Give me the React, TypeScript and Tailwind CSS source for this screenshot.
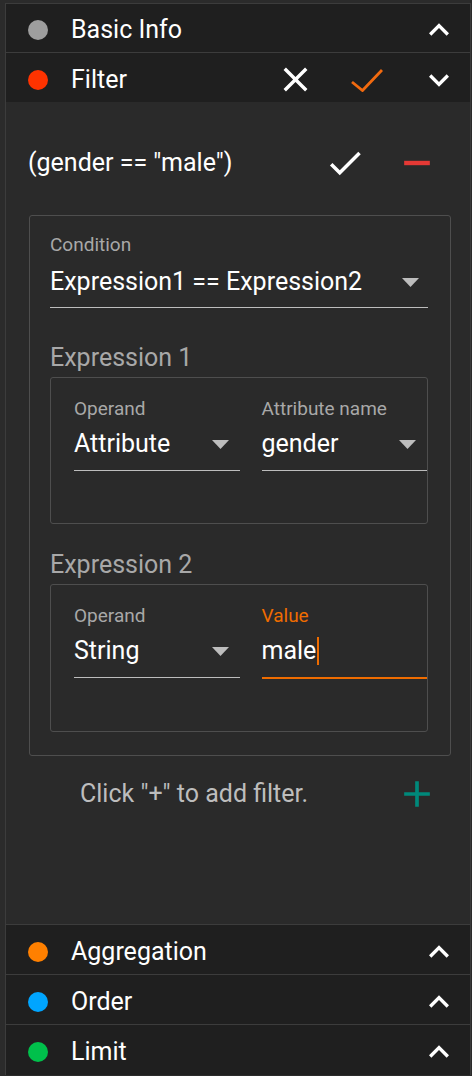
import React from "react";

type IconProps = { className?: string; size?: number };

const ChevronUp = ({ size = 40, className = "" }: IconProps) => (
  <svg width={size} height={size} viewBox="0 0 24 24" className={className} fill="currentColor">
    <path d="M12 8l-6 6 1.41 1.41L12 10.83l4.59 4.58L18 14z" />
  </svg>
);

const ChevronDown = ({ size = 40, className = "" }: IconProps) => (
  <svg width={size} height={size} viewBox="0 0 24 24" className={className} fill="currentColor">
    <path d="M16.59 8.59L12 13.17 7.41 8.59 6 10l6 6 6-6z" />
  </svg>
);

const CloseIcon = ({ size = 41, className = "" }: IconProps) => (
  <svg width={size} height={size} viewBox="0 0 24 24" className={className} fill="currentColor">
    <path d="M19 6.41L17.59 5 12 10.59 6.41 5 5 6.41 10.59 12 5 17.59 6.41 19 12 13.41 17.59 19 19 17.59 13.41 12z" />
  </svg>
);

const CheckIcon = ({ size = 42, className = "" }: IconProps) => (
  <svg width={size} height={size} viewBox="0 0 24 24" className={className} fill="currentColor">
    <path d="M9 16.17L4.83 12l-1.42 1.41L9 19 21 7l-1.41-1.41z" />
  </svg>
);

const RemoveIcon = ({ size = 44, className = "" }: IconProps) => (
  <svg width={size} height={size} viewBox="0 0 24 24" className={className} fill="currentColor">
    <path d="M19 13.2H5v-2.4h14v2.4z" />
  </svg>
);

const AddIcon = ({ size = 44, className = "" }: IconProps) => (
  <svg width={size} height={size} viewBox="0 0 24 24" className={className} fill="currentColor">
    <path d="M19 13h-6v6h-2v-6H5v-2h6V5h2v6h6v2z" />
  </svg>
);

const DropArrow = () => (
  <svg width="17" height="9" viewBox="0 0 17 9" className="shrink-0 text-[#bdbdbd]" fill="currentColor">
    <path d="M0 0h17L8.5 9z" />
  </svg>
);

// header row of one accordion section
const SectionHeader = ({
  color,
  title,
  children,
}: {
  color: string;
  title: string;
  children?: React.ReactNode;
}) => (
  <div className="flex h-full items-center bg-[#1f1f1f] pl-[22px] pr-[11px] pt-[4px]">
    <span className={`h-5 w-5 shrink-0 rounded-full ${color}`} />
    <span className="ml-[23px] flex-1 text-[25px] leading-[30px] text-white">{title}</span>
    {children}
  </div>
);

const Select = ({ label, value, width = "w-[166px]" }: { label: string; value: string; width?: string }) => (
  <div className={width}>
    <div className="text-[19px] leading-[22px] text-[#a8a8a8]">{label}</div>
    <div className="mt-[9px] flex items-center border-b border-[#bdbdbd] pb-[11px] pr-[11px]">
      <span className="flex-1 text-[25px] leading-[30px] text-white">{value}</span>
      <DropArrow />
    </div>
  </div>
);

const TextField = ({ label, value }: { label: string; value: string }) => (
  <div className="w-[166px]">
    <div className="text-[19px] leading-[22px] text-[#ef6c00]">{label}</div>
    <div className="mt-[9px] flex items-center border-b-2 border-[#ef6c00] pb-[11px]">
      <span className="text-[25px] leading-[30px] text-white">{value}</span>
      <span className="ml-[1px] h-[28px] w-[2px] bg-[#ef6c00]" />
    </div>
  </div>
);

const ExpressionBox = ({ title, children }: { title: string; children: React.ReactNode }) => (
  <div>
    <div className="text-[25px] leading-[30px] text-[#a8a8a8]">{title}</div>
    <div className="mt-1 rounded-[3px] border border-[#4e4e4e] pb-[52px] pl-[23px] pt-5">
      <div className="flex gap-[22px]">{children}</div>
    </div>
  </div>
);

export default function App() {
  return (
    <div className="h-[1076px] w-[472px] overflow-hidden bg-[#2b2b2b] pt-[3px] pl-[5px] font-['Roboto',sans-serif]">
      <div className="w-[466px] border-x border-t border-[#3c3c3c]">
        <div className="h-[49px] border-b border-[#3c3c3c]">
          <SectionHeader color="bg-[#9e9e9e]" title="Basic Info">
            <ChevronUp className="text-white" />
          </SectionHeader>
        </div>
        <div className="h-[49px]">
          <SectionHeader color="bg-[#ff3300]" title="Filter">
            <CloseIcon className="text-white" />
            <svg width="32" height="24" viewBox="0 0 32 24" className="ml-[35px] mr-[36px]" fill="none">
              <polyline points="1,14 11.5,22.5 31,2" stroke="#f26a0f" strokeWidth="2.8" />
            </svg>
            <ChevronDown className="text-white" />
          </SectionHeader>
        </div>

        {/* filter editor */}
        <div className="h-[823px] border-b border-[#3c3c3c] bg-[#2a2a2a] pt-[33px]">
          <div className="flex h-14 items-center pl-[22px] pr-[31px]">
            <span className="flex-1 text-[25px] leading-[30px] text-white">(gender == "male")</span>
            <CheckIcon className="text-white" />
            <RemoveIcon className="ml-[29px] text-[#e53935]" />
          </div>

          <div className="ml-[23px] mt-[24px] w-[422px] rounded-[3px] border border-[#4e4e4e] pb-[23px] pl-5 pr-[22px] pt-[18px]">
            <div className="text-[19px] leading-[22px] text-[#a8a8a8]">Condition</div>
            <div className="mt-[11px] flex items-center border-b border-[#bdbdbd] pb-[10px] pr-[9px]">
              <span className="flex-1 text-[25px] leading-[30px] text-white">Expression1 == Expression2</span>
              <DropArrow />
            </div>

            <div className="mt-[35px]">
              <ExpressionBox title="Expression 1">
                <Select label="Operand" value="Attribute" />
                <Select label="Attribute name" value="gender" />
              </ExpressionBox>
            </div>
            <div className="mt-[26px]">
              <ExpressionBox title="Expression 2">
                <Select label="Operand" value="String" />
                <TextField label="Value" value="male" />
              </ExpressionBox>
            </div>
          </div>

          <div className="mt-[22px] flex h-[31px] items-center pl-[74px] pr-[31px]">
            <span className="flex-1 text-[25px] leading-[30px] text-[#bdbdbd]">Click "+" to add filter.</span>
            <AddIcon className="text-[#00897b]" />
          </div>
        </div>

        <div className="h-[50px] border-b border-[#3c3c3c]">
          <SectionHeader color="bg-[#ff8000]" title="Aggregation">
            <ChevronUp className="text-white" />
          </SectionHeader>
        </div>
        <div className="h-[50px] border-b border-[#3c3c3c]">
          <SectionHeader color="bg-[#00a5ff]" title="Order">
            <ChevronUp className="text-white" />
          </SectionHeader>
        </div>
        <div className="h-[50px]">
          <SectionHeader color="bg-[#00c04b]" title="Limit">
            <ChevronUp className="text-white" />
          </SectionHeader>
        </div>
      </div>
    </div>
  );
}
